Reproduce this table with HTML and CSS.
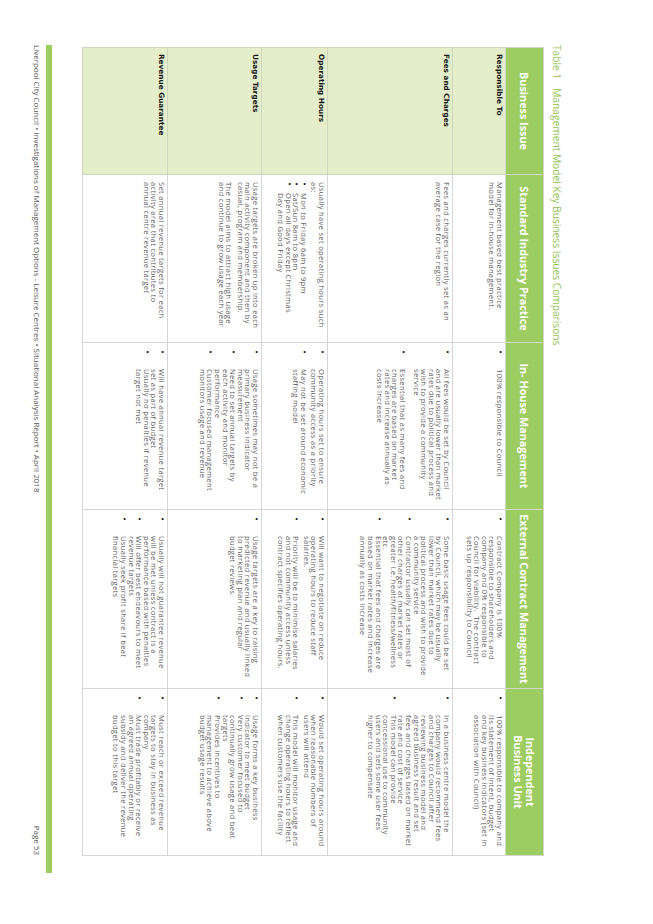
FILE: index.html
```html
<!DOCTYPE html>
<html lang="en">
<head>
<meta charset="utf-8">
<title>Management Model Key Business Issues Comparisons</title>
<link rel="stylesheet" href="styles.css">
</head>
<body>
<div class="frame">
<div class="sheet">
  <div class="caption"><span class="cap-num">Table 1</span><span>Management Model Key Business Issues Comparisons</span></div>
  <table class="grid">
    <colgroup>
      <col class="c1"><col class="c2"><col class="c3"><col class="c4"><col class="c5">
    </colgroup>
    <thead>
      <tr class="r-head">
        <th>Business Issue</th>
        <th>Standard Industry Practice</th>
        <th>In- House Management</th>
        <th>External Contract Management</th>
        <th>Independent<br>Business Unit</th>
      </tr>
    </thead>
    <tbody>
      <tr class="r1">
        <td class="issue">Responsible To</td>
        <td class="std"><p>Management based best practice<br>model for in-house management.</p></td>
        <td><ul class="pts"><li><span>100% responsible to Council</span></li></ul></td>
        <td><ul class="pts"><li><span>Contract Company is 100%<br>responsible to shareholders and<br>company and 0% responsible to<br>Council for viability.&nbsp; The contract<br>sets up responsibility to Council</span></li></ul></td>
        <td><ul class="pts"><li><span>100% responsible to company and<br>its statement of intent, budget<br>and key business indicators (set in<br>association with Council)</span></li></ul></td>
      </tr>
      <tr class="r2">
        <td class="issue">Fees and Charges</td>
        <td class="std"><p>Fees and charges currently set as an<br>average case for the region</p></td>
        <td><ul class="pts wide-gap">
          <li><span>All fees would be set by Council<br>and are usually lower than market<br>rates due to political process and<br>wish to provide a community<br>service</span></li>
          <li><span>Essential that as many fees and<br>charges are based on market<br>rates and increase annually as<br>costs increase</span></li>
        </ul></td>
        <td><ul class="pts">
          <li><span>Some basic usage fees could be set<br>by Council, which may be usually<br>lower than market rates due to<br>political process and wish to provide<br>a community service</span></li>
          <li><span>Contractor usually can set most of<br>other charges at market rates or<br>greater i.e. health/fitness/wellness<br>etc.</span></li>
          <li><span>Essential that fees and charges are<br>based on market rates and increase<br>annually as costs increase</span></li>
        </ul></td>
        <td><ul class="pts">
          <li><span>In a business centre model the<br>company would recommend fees<br>and charges to Council after<br>reviewing business model and<br>agreed business result and set<br>fees and charges based on market<br>rate and cost of service</span></li>
          <li><span>This model can provide<br>concessional use to community<br>users and sets some user fees<br>higher to compensate</span></li>
        </ul></td>
      </tr>
      <tr class="r3">
        <td class="issue">Operating Hours</td>
        <td class="std">
          <p>Usually have set operating hours such<br>as:</p>
          <ul class="pts narrow">
            <li><span>Mon to Friday 6am to 9pm</span></li>
            <li><span>Sat/Sun 8am to 8pm</span></li>
            <li><span>Open all days except Christmas<br>Day and Good Friday</span></li>
          </ul>
        </td>
        <td><ul class="pts gap">
          <li><span>Operating hours set to ensure<br>community access as a priority</span></li>
          <li><span>May not be set around economic<br>staffing model</span></li>
        </ul></td>
        <td><ul class="pts gap">
          <li><span>Will want to negotiate on reduce<br>operating hours to reduce staff<br>salaries.</span></li>
          <li><span>Priority will be to minimise salaries<br>and not community access unless<br>contract specifies operating hours.</span></li>
        </ul></td>
        <td><ul class="pts gap">
          <li><span>Would set operating hours around<br>when reasonable numbers of<br>users will attend</span></li>
          <li><span>This model will monitor usage and<br>change operating hours to reflect<br>when customers use the facility</span></li>
        </ul></td>
      </tr>
      <tr class="r4">
        <td class="issue">Usage Targets</td>
        <td class="std">
          <p>Usage targets are broken up into each<br>main activity component and then by<br>casual, program and membership.</p>
          <p class="next">The model aims to attract high usage<br>and continue to grow usage each year</p>
        </td>
        <td><ul class="pts">
          <li><span>Usage sometimes may not be a<br>primary business indicator<br>measurement</span></li>
          <li><span>Need to set annual targets by<br>each activity and monitor<br>performance</span></li>
          <li><span>Customer focused management<br>monitors usage and revenue</span></li>
        </ul></td>
        <td><ul class="pts">
          <li><span>Usage targets are a key to raising<br>predicted revenue and usually linked<br>to marketing plan and regular<br>budget reviews.</span></li>
        </ul></td>
        <td><ul class="pts">
          <li><span>Usage forms a key business<br>indicator to meet budget</span></li>
          <li><span>Very customer focused to<br>continually grow usage and beat<br>targets</span></li>
          <li><span>Provides incentives to<br>management to achieve above<br>budget usage results</span></li>
        </ul></td>
      </tr>
      <tr class="r5">
        <td class="issue">Revenue Guarantee</td>
        <td class="std"><p>Set annual revenue targets for each<br>activity area that contributes to<br>annual centre revenue target</p></td>
        <td><ul class="pts">
          <li><span>Will have annual revenue target<br>set as part of budget</span></li>
          <li><span>Usually no penalties if revenue<br>target not met</span></li>
        </ul></td>
        <td><ul class="pts">
          <li><span>Usually will not guarantee revenue<br>will be met unless contract is a<br>performance based with penalties</span></li>
          <li><span>Will offer best endeavours to meet<br>revenue targets</span></li>
          <li><span>Usually seek profit share if beat<br>financial targets</span></li>
        </ul></td>
        <td><ul class="pts">
          <li><span>Must reach or exceed revenue<br>targets to stay in business as<br>company</span></li>
          <li><span>Must trade profitably or receive<br>an agreed annual operating<br>subsidy and deliver the revenue<br>budget to this target</span></li>
        </ul></td>
      </tr>
    </tbody>
  </table>
  <div class="rule"></div>
  <div class="foot">
    <span>Liverpool City Council &bull; Investigations of Management Options - Leisure Centres &bull; Situational Analysis Report &bull; April 2018</span>
    <span>Page 53</span>
  </div>
</div>
</div>
</body>
</html>
```

FILE: styles.css
```css
html, body {
  margin: 0;
  padding: 0;
  background: #ffffff;
}

.frame {
  width: 653px;
  height: 924px;
  overflow: hidden;
}

.sheet {
  width: 924px;
  height: 653px;
  box-sizing: border-box;
  padding: 90px 0 0 45px;
  background: #ffffff;
  transform-origin: 0 0;
  transform: translateX(653px) rotate(90deg);
  font-family: "Open Sans", "Liberation Sans", sans-serif;
  color: #4a4a4a;
}

.caption {
  display: flex;
  gap: 9px;
  height: 13px;
  line-height: 13px;
  font-size: 10.2px;
  color: #93c65a;
  white-space: nowrap;
}

.grid {
  margin: 6px 0 0 2px;
  width: 808px;
  border-collapse: collapse;
  table-layout: fixed;
}

.c1 { width: 127px; }
.c2 { width: 168px; }
.c3 { width: 167px; }
.c4 { width: 179px; }
.c5 { width: 167px; }

.r-head { height: 38px; }
.r1 { height: 53px; }
.r2 { height: 125px; }
.r3 { height: 66px; }
.r4 { height: 94px; }
.r5 { height: 85px; }

.grid th {
  background: #9ccc62;
  color: #ffffff;
  font-weight: 700;
  font-size: 10.8px;
  line-height: 11.5px;
  text-align: center;
  vertical-align: middle;
  border: 1px solid #d2d8c8;
  padding: 0 2px;
  white-space: nowrap;
}

.grid td {
  vertical-align: top;
  border: 1px solid #d6d6d6;
  padding: 2px 2px 2px 7px;
  font-size: 7.6px;
  letter-spacing: 0.3px;
  line-height: 7.6px;
  white-space: nowrap;
  color: #5a5a5a;
}

.grid td.issue {
  background: #e4eecb;
  border-color: #cfd6c0;
  font-family: "DejaVu Sans", "Liberation Sans", sans-serif;
  font-weight: 700;
  font-size: 7.3px;
  letter-spacing: 0;
  line-height: 9px;
  color: #1a1a1a;
  padding: 1px 6px;
}

.grid p {
  margin: 0;
}

.grid p.next {
  margin-top: 4px;
}

.pts {
  list-style: none;
  margin: 0;
  padding: 0;
}

.pts li {
  display: flex;
}

.pts li::before {
  content: "\2022";
  flex: 0 0 19px;
  font-family: "DejaVu Sans", sans-serif;
  font-size: 7px;
  color: #111111;
}

.pts.gap li + li {
  margin-top: 3px;
}

.pts.wide-gap li + li {
  margin-top: 6px;
}

.pts.narrow {
  margin-top: 3px;
}

.pts.narrow li::before {
  flex-basis: 11px;
}

.rule {
  margin-top: 30px;
  width: 828px;
  height: 6px;
  background: #9ccc62;
}

.foot {
  margin-top: 4px;
  width: 810px;
  display: flex;
  justify-content: space-between;
  font-size: 8px;
  line-height: 9px;
  color: #555555;
  white-space: nowrap;
}
```
